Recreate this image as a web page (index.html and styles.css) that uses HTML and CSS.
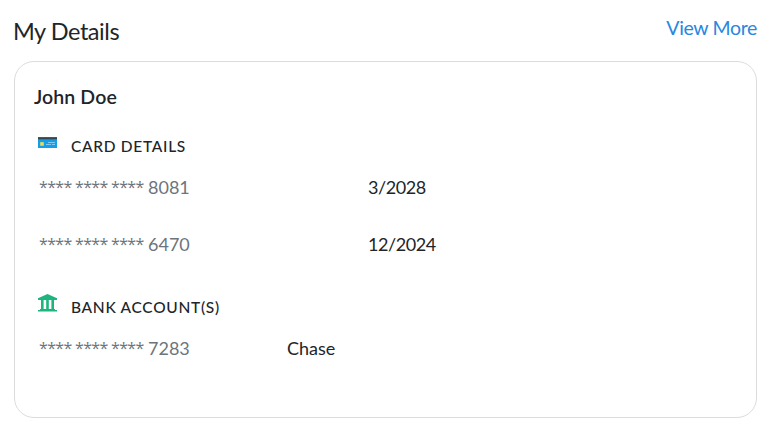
FILE: index.html
```html
<!DOCTYPE html>
<html lang="en">
<head>
<meta charset="utf-8">
<title>My Details</title>
<link rel="stylesheet" href="styles.css">
</head>
<body>
<header class="header">
  <h1 class="title">My Details</h1>
  <a class="more" href="#">View More</a>
</header>
<main class="card">
  <h2 class="name">John Doe</h2>
  <section class="section">
    <h3 class="heading">
      <svg class="icon" width="19" height="11" viewBox="0 0 19 11"><path fill="#139fe8" d="M0 0h19v11H0z"/><path fill="#455a64" d="M0 0h19v2H0z"/><path fill="#37474f" d="M0 1h19v1.3H0z"/><path fill="#7fc4a0" d="M2 5h4v4H2z"/><path fill="#ffd54f" d="M2.5 5.4h3v3h-3z"/><path fill="#81c9f5" d="M10 5h7v1h-7zM8 7h5v1H8zM14 7h3v1h-3z"/></svg>
      <span class="label">CARD DETAILS</span>
    </h3>
    <div class="row"><span class="number"><span class="mask">**** **** ****</span><span class="digits">8081</span></span><span class="value date">3/2028</span></div>
    <div class="row"><span class="number"><span class="mask">**** **** ****</span><span class="digits">6470</span></span><span class="value date">12/2024</span></div>
  </section>
  <section class="section">
    <h3 class="heading">
      <svg class="icon" width="19" height="18" viewBox="0 0 19 18"><path fill="#1db57c" d="M9.5 0 19 4.2V6H0V4.2zM3 6h2.6v9H3zM8.2 6h2.6v9H8.2zM13.4 6H16v9h-2.6zM2 15h15v1H2zM0 16h19v1.6H0z"/></svg>
      <span class="label">BANK ACCOUNT(S)</span>
    </h3>
    <div class="row bank-row"><span class="number"><span class="mask">**** **** ****</span><span class="digits">7283</span></span><span class="value">Chase</span></div>
  </section>
</main>
</body>
</html>
```
FILE: styles.css
```css
* { box-sizing: border-box; }
body {
  margin: 0;
  height: 432px;
  padding: 14px 25px 0 13px;
  background: #fff;
  color: #212529;
  font-family: Lato, "Open Sans", sans-serif;
}
h1, h2, h3 { margin: 0; }
.header {
  display: flex;
  justify-content: space-between;
  height: 47px;
}
.title { font-size: 23.5px; font-weight: 400; line-height: 34px; letter-spacing: -0.45px; }
.more { font-size: 19.5px; line-height: 28px; letter-spacing: -0.35px; color: #2887e0; text-decoration: none; }
.card {
  height: 357px;
  margin-left: 1px;
  padding: 20px;
  border: 1px solid #dcdcdc;
  border-radius: 20px;
}
.name { margin-left: -1px; font-size: 19.5px; font-weight: 600; line-height: 30px; letter-spacing: 0.1px; }
.section { height: 161px; padding-top: 20px; }
.heading {
  display: flex;
  height: 28px;
  padding-left: 3px;
  font-size: 15.5px;
  font-weight: 500;
  line-height: 28px;
}
.label { letter-spacing: 0.7px; }
.icon { margin-right: 14px; margin-top: 5px; flex: none; }
.section + .section .icon { margin-top: 1px; }
.row {
  display: grid;
  grid-template-columns: 328px 1fr;
  height: 57px;
  padding-left: 5px;
  font-size: 18px;
  line-height: 55px;
}
.bank-row { grid-template-columns: 247px 1fr; }
.date { letter-spacing: -0.45px; }
.number { display: flex; color: #6c757d; }
.mask {
  width: 108px;
  margin-left: -1px;
  margin-right: 1px;
  white-space: pre;
  font-family: "Open Sans", sans-serif;
  font-size: 16px;
  letter-spacing: -0.68px;
}
```
